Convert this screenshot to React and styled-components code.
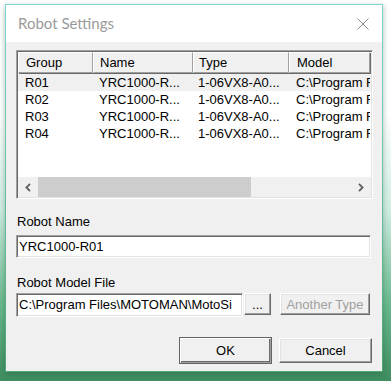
import React from 'react';
import styled, { createGlobalStyle, css } from 'styled-components';

const GlobalStyle = createGlobalStyle`
  html, body {
    margin: 0;
    padding: 0;
  }
  body {
    width: 391px;
    height: 381px;
    overflow: hidden;
    background: linear-gradient(180deg, #ffffff 0%, #ffffff 30%, #cfeee2 55%, #6ab98f 80%, #3f8d60 100%);
    font-family: 'Liberation Sans', Arial, sans-serif;
  }
`;

const Desktop = styled.div`
  padding: 4px 0 0 5px;
`;

const Frame = styled.div`
  width: 378px;
  height: 368px;
  padding: 1px;
  box-sizing: border-box;
  background: linear-gradient(180deg, #7fd5d1 0%, #6cc4b0 40%, #4ea873 100%);
  box-shadow: 0 2px 6px rgba(20, 70, 40, 0.35);
`;

const Window = styled.div`
  height: 100%;
  display: flex;
  flex-direction: column;
  background: #f0f0f0;
`;

const TitleBar = styled.div`
  height: 37px;
  flex: none;
  display: flex;
  align-items: center;
  justify-content: space-between;
  padding: 0 13px 0 12px;
  background: #ffffff;
`;

const Title = styled.span`
  font-family: 'Segoe UI', Lato, 'Noto Sans', sans-serif;
  font-size: 15px;
  color: #9a9a9a;
  padding-bottom: 1px;
`;

const Client = styled.div`
  flex: 1;
  display: flex;
  flex-direction: column;
  padding: 8px 9px 0 10px;
  font-size: 13px;
  color: #000;
`;

const sunken = css`
  border-style: solid;
  border-width: 1px;
  border-color: #a0a0a0 #ffffff #ffffff #a0a0a0;
  box-shadow: inset 1px 1px 0 #696969, inset -1px -1px 0 #e3e3e3;
`;

const ListView = styled.div`
  ${sunken};
  height: 149px;
  box-sizing: border-box;
  padding: 1px;
  display: flex;
  flex-direction: column;
  background: #ffffff;
  overflow: hidden;
`;

const Header = styled.div`
  display: flex;
  flex: none;
  height: 21px;
`;

const HeaderCell = styled.div`
  width: ${(p) => p.w}px;
  flex: none;
  box-sizing: border-box;
  padding-left: ${(p) => p.pad}px;
  line-height: 19px;
  background: #f0f0f0;
  border-top: 1px solid #ffffff;
  border-left: 1px solid #ffffff;
  border-right: 1px solid #a0a0a0;
  border-bottom: 1px solid #a0a0a0;
  box-shadow: 1px 1px 0 #696969;
  white-space: nowrap;
  overflow: hidden;
`;

const Body = styled.div`
  flex: 1;
  padding-top: 1px;
`;

const Row = styled.div`
  display: flex;
  height: 17px;
  line-height: 17px;
  background: ${(p) => (p.selected ? '#f0f0f0' : 'transparent')};
`;

const Cell = styled.div`
  width: ${(p) => p.w}px;
  flex: none;
  box-sizing: border-box;
  padding-left: ${(p) => p.pad}px;
  white-space: nowrap;
  overflow: hidden;
`;

const HScroll = styled.div`
  flex: none;
  height: 20px;
  display: flex;
  background: #f0f0f0;
`;

const ArrowBox = styled.div`
  width: 20px;
  display: flex;
  align-items: center;
  justify-content: center;
`;

const Track = styled.div`
  flex: 1;
  display: flex;
`;

const Thumb = styled.div`
  width: 213px;
  background: #cdcdcd;
`;

const Label = styled.div`
  line-height: 15px;
  margin-top: ${(p) => p.mt}px;
  padding-left: 1px;
`;

const TextBox = styled.div`
  ${sunken};
  box-sizing: border-box;
  width: ${(p) => p.w}px;
  height: ${(p) => p.h}px;
  margin-top: ${(p) => p.mt || 0}px;
  padding: 2px 0 0 2px;
  line-height: 17px;
  background: #ffffff;
  white-space: nowrap;
  overflow: hidden;
`;

const FileRow = styled.div`
  display: flex;
  align-items: flex-start;
  margin-top: 3px;
`;

const Button = styled.div`
  box-sizing: border-box;
  width: ${(p) => p.w}px;
  height: ${(p) => p.h}px;
  margin-left: ${(p) => p.ml || 0}px;
  display: flex;
  align-items: center;
  justify-content: center;
  background: #f0f0f0;
  color: ${(p) => (p.disabled ? '#a0a0a0' : '#000')};
  border-style: solid;
  border-width: 1px;
  border-color: #ffffff #696969 #696969 #ffffff;
  box-shadow: inset -1px -1px 0 #a0a0a0, inset 1px 1px 0 #e3e3e3;
  ${(p) =>
    p.primary &&
    css`
      outline: 1px solid #646464;
      outline-offset: 0;
      border-color: #ffffff #a0a0a0 #a0a0a0 #ffffff;
      box-shadow: inset -1px -1px 0 #696969;
    `}
`;

const Footer = styled.div`
  display: flex;
  justify-content: flex-end;
  margin-top: 21px;
  padding-right: 1px;
`;

const columns = [
  { key: 'group', title: 'Group', w: 75, pad: 7 },
  { key: 'name', title: 'Name', w: 100, pad: 6 },
  { key: 'type', title: 'Type', w: 96, pad: 5 },
  { key: 'model', title: 'Model', w: 81, pad: 7 },
];

const robots = ['R01', 'R02', 'R03', 'R04'].map((g) => ({
  group: g,
  name: 'YRC1000-R...',
  type: '1-06VX8-A0...',
  model: 'C:\\Program F',
}));

const CloseIcon = () => (
  <svg width="12" height="12" viewBox="0 0 12 12">
    <path d="M0.5 0.5 L11.5 11.5 M11.5 0.5 L0.5 11.5" stroke="#8c8c8c" strokeWidth="1" fill="none" />
  </svg>
);

const Chevron = ({ dir }) => (
  <svg width="6" height="9" viewBox="0 0 6 9">
    <path
      d={dir === 'left' ? 'M5 0.8 L1.4 4.5 L5 8.2' : 'M1 0.8 L4.6 4.5 L1 8.2'}
      stroke="#606060"
      strokeWidth="1.8"
      fill="none"
    />
  </svg>
);

const App = () => {
  return (
    <>
      <GlobalStyle />
      <Desktop>
        <Frame>
          <Window>
            <TitleBar>
              <Title>Robot Settings</Title>
              <CloseIcon />
            </TitleBar>
            <Client>
              <ListView>
                <Header>
                  {columns.map((c) => (
                    <HeaderCell key={c.key} w={c.w} pad={c.pad}>
                      {c.title}
                    </HeaderCell>
                  ))}
                </Header>
                <Body>
                  {robots.map((r, i) => (
                    <Row key={r.group} selected={i === 0}>
                      {columns.map((c) => (
                        <Cell key={c.key} w={c.w} pad={c.pad}>
                          {r[c.key]}
                        </Cell>
                      ))}
                    </Row>
                  ))}
                </Body>
                <HScroll>
                  <ArrowBox>
                    <Chevron dir="left" />
                  </ArrowBox>
                  <Track>
                    <Thumb />
                  </Track>
                  <ArrowBox>
                    <Chevron dir="right" />
                  </ArrowBox>
                </HScroll>
              </ListView>
              <Label mt={15}>Robot Name</Label>
              <TextBox w={355} h={23} mt={6}>
                YRC1000-R01
              </TextBox>
              <Label mt={17}>Robot Model File</Label>
              <FileRow>
                <TextBox w={227} h={24}>
                  C:\Program Files\MOTOMAN\MotoSi
                </TextBox>
                <Button w={27} h={22} ml={1}>
                  ...
                </Button>
                <Button w={90} h={22} ml={9} disabled>
                  Another Type
                </Button>
              </FileRow>
              <Footer>
                <Button w={91} h={25} primary>
                  OK
                </Button>
                <Button w={93} h={25} ml={8}>
                  Cancel
                </Button>
              </Footer>
            </Client>
          </Window>
        </Frame>
      </Desktop>
    </>
  );
};

export default App;
